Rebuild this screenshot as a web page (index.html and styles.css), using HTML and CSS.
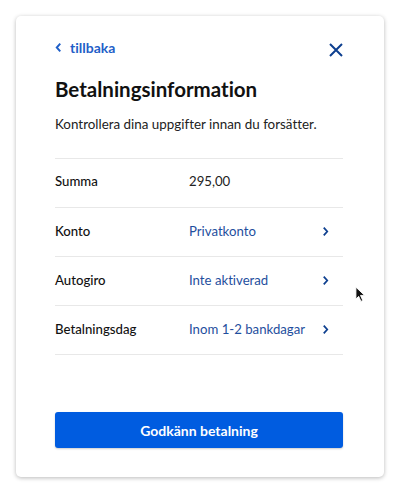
FILE: index.html
```html
<!DOCTYPE html>
<html lang="sv">
<head>
<meta charset="utf-8">
<link rel="stylesheet" href="styles.css">
</head>
<body>
<div class="card">
  <div class="topbar">
    <a class="back" href="#">
      <svg class="back-icon" viewBox="0 0 8 12" width="7" height="11"><path d="M6 1.5 L2 6 L6 10.5" fill="none" stroke="currentColor" stroke-width="2.2"/></svg>
      <span>tillbaka</span>
    </a>
    <svg class="close" viewBox="0 0 14 14" width="14" height="14"><path d="M1 1 L13 13 M13 1 L1 13" stroke="currentColor" stroke-width="2" fill="none"/></svg>
  </div>
  <h1 class="title">Betalningsinformation</h1>
  <p class="lead">Kontrollera dina uppgifter innan du forsätter.</p>
  <div class="rows">
    <div class="row">
      <span class="label">Summa</span>
      <span class="value plain">295,00</span>
      <span class="chev"></span>
    </div>
    <div class="row">
      <span class="label">Konto</span>
      <span class="value">Privatkonto</span>
      <svg class="chev" viewBox="0 0 8 12" width="7" height="11"><path d="M2 1.5 L6 6 L2 10.5" fill="none" stroke="currentColor" stroke-width="2"/></svg>
    </div>
    <div class="row">
      <span class="label">Autogiro</span>
      <span class="value">Inte aktiverad</span>
      <svg class="chev" viewBox="0 0 8 12" width="7" height="11"><path d="M2 1.5 L6 6 L2 10.5" fill="none" stroke="currentColor" stroke-width="2"/></svg>
    </div>
    <div class="row">
      <span class="label">Betalningsdag</span>
      <span class="value">Inom 1-2 bankdagar</span>
      <svg class="chev" viewBox="0 0 8 12" width="7" height="11"><path d="M2 1.5 L6 6 L2 10.5" fill="none" stroke="currentColor" stroke-width="2"/></svg>
    </div>
  </div>
  <button class="primary">Godkänn betalning</button>
</div>
<svg class="cursor" viewBox="0 0 12 18" width="11" height="17"><path d="M1 1 L1 14 L4 11 L6.5 16.5 L8.5 15.5 L6 10 L10.5 10 Z" fill="#111" stroke="#fff" stroke-width="1"/></svg>
</body>
</html>
```

FILE: styles.css
```css
* { box-sizing: border-box; }
html, body { margin: 0; padding: 0; background: #fff; }
body {
  width: 400px;
  height: 492px;
  padding: 16px;
  font-family: Lato, "Open Sans", sans-serif;
  font-variant-ligatures: none;
  color: #1a1a1a;
  position: relative;
}
.card {
  width: 368px;
  height: 461px;
  background: #fff;
  border-radius: 5px;
  box-shadow: 0 1px 4px rgba(0,0,0,0.28);
  padding: 20px 41px 0 39px;
  display: flex;
  flex-direction: column;
}
.topbar {
  display: flex;
  justify-content: space-between;
  align-items: center;
  height: 28px;
}
.back {
  display: flex;
  align-items: center;
  gap: 8px;
  color: #1f5fc8;
  text-decoration: none;
  font-size: 14px;
  font-weight: 700;
  margin-top: -6px;
}
.back-icon { display: block; }
.close { color: #0d3f8f; display: block; margin-right: 0; }
.title {
  margin: 10px 0 0;
  font-size: 20.5px;
  font-weight: 700;
  color: #111;
  line-height: 30px;
}
.lead {
  margin: 10px 0 0;
  font-size: 13.4px;
  line-height: 20px;
  color: #222;
}
.rows {
  margin-top: 24px;
  border-top: 1px solid #e8e8e8;
}
.row {
  display: flex;
  align-items: center;
  height: 49px;
  border-bottom: 1px solid #e8e8e8;
  font-size: 13.2px;
  padding-bottom: 2px;
}
.row:first-child { padding-bottom: 5px; }
.label { width: 134px; color: #111; font-weight: 500; }
.value { flex: 1; color: #1f4f9e; }
.value.plain { color: #222; }
.chev { width: 7px; color: #0d3f8f; margin-right: 14px; display: block; }
.primary {
  margin-top: 57px;
  height: 36px;
  width: 100%;
  border: none;
  border-radius: 3px;
  background: #005ce0;
  color: #fff;
  font-family: Lato, "Open Sans", sans-serif;
  font-size: 14px;
  font-weight: 700;
  box-shadow: 0 1px 2px rgba(0,0,0,0.2);
}
.cursor { position: absolute; left: 355px; top: 286px; }
```
